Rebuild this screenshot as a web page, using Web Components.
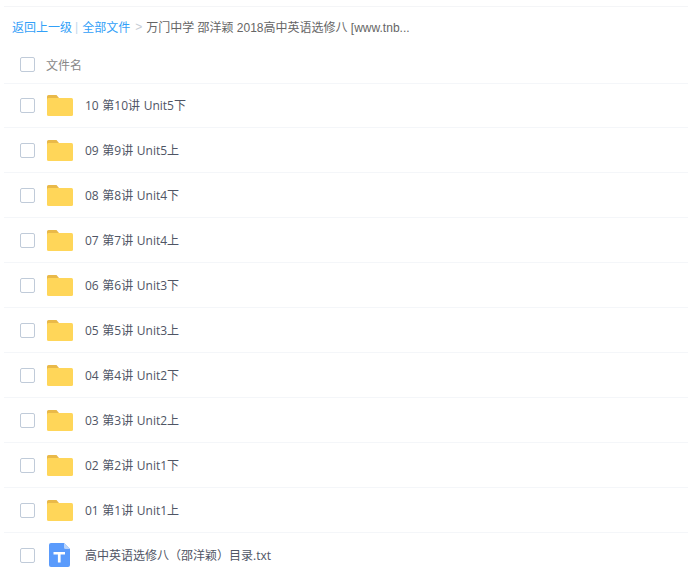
<!DOCTYPE html>
<html><head><meta charset="utf-8">
<style>
html,body{margin:0;padding:0;background:#fff;height:568px;overflow:hidden}
body{font-family:"Open Sans","Noto Sans CJK SC",sans-serif;font-size:12px}
</style></head><body>
<file-browser>
<crumb-bar></crumb-bar>
<list-header></list-header>
<file-row first kind="folder" name="10 第10讲 Unit5下"></file-row>
<file-row kind="folder" name="09 第9讲 Unit5上"></file-row>
<file-row kind="folder" name="08 第8讲 Unit4下"></file-row>
<file-row kind="folder" name="07 第7讲 Unit4上"></file-row>
<file-row kind="folder" name="06 第6讲 Unit3下"></file-row>
<file-row kind="folder" name="05 第5讲 Unit3上"></file-row>
<file-row kind="folder" name="04 第4讲 Unit2下"></file-row>
<file-row kind="folder" name="03 第3讲 Unit2上"></file-row>
<file-row kind="folder" name="02 第2讲 Unit1下"></file-row>
<file-row kind="folder" name="01 第1讲 Unit1上"></file-row>
<file-row kind="txt" name="高中英语选修八（邵洋颖）目录.txt"></file-row>
</file-browser>
<script>
const def=(n,html)=>customElements.define(n,class extends HTMLElement{
  connectedCallback(){ if(this.shadowRoot) return; const s=this.attachShadow({mode:'open'}); s.innerHTML=html(this); }
});
def('file-browser',()=>`<style>:host{display:block;margin:6px 0 0 4px;border-top:1px solid #f4f5f7}</style><slot></slot>`);
def('crumb-bar',()=>`<style>
:host{display:flex;align-items:center;height:39px;padding-left:8px;color:#666;font:12px "Liberation Sans","Noto Sans CJK SC",sans-serif;white-space:nowrap}
a{color:#32a0f8}.sep{color:#c4d8ec;margin:0 4px 0 3px}.gt{color:#c6ccd4;margin:0 4px 0 5px}
</style><a>返回上一级</a><span class="sep">|</span><a>全部文件</a><span class="gt">&gt;</span><span>万门中学 邵洋颖 2018高中英语选修八 [www.tnb...</span>`);
const box=`<span class="cb"></span>`;
const boxCss=`.cb{width:13px;height:13px;border:1px solid #c0cbd9;border-radius:2px;box-sizing:content-box;flex:none;margin-left:16px;background:#fff}`;
def('list-header',()=>`<style>
:host{display:flex;align-items:center;height:37px;color:#888;border-bottom:1px solid #f4f6f9;font-size:12px}
${boxCss}.t{margin-left:11px}</style>${box}<span class="t">文件名</span>`);
const folder=`<svg width="28" height="24" viewBox="0 0 28 24"><path d="M1 3.5A1.5 1.5 0 0 1 2.5 2H10.5L13 5v8H1z" fill="#e9b949"/><rect x="1" y="5" width="26" height="18" rx="1.5" fill="#ffd659"/></svg>`;
const txt=`<svg width="28" height="26" viewBox="0 0 28 26"><path d="M3 3A2 2 0 0 1 5 1H18L24 7V23A2 2 0 0 1 22 25H5A2 2 0 0 1 3 23Z" fill="#5a9bfc"/><path d="M18 1L24 7H19.5A1.5 1.5 0 0 1 18 5.5Z" fill="#b9d4fb"/><path d="M7.5 10H19V12.5H14.6V20.5H11.9V12.5H7.5Z" fill="#fff"/></svg>`;
def('file-row',h=>`<style>
:host{display:flex;align-items:center;height:44px;${h.hasAttribute('first')?'margin-top:-1px;':''}border-bottom:1px solid #f4f6f9;color:#555;font-size:12px;white-space:nowrap}
${boxCss}.i{display:flex;width:28px;height:26px;align-items:center;margin:0 11px 0 11px;flex:none}.n{color:#4f5565;word-spacing:.5px}</style>
${box}<span class="i">${h.getAttribute('kind')==='txt'?txt:folder}</span><span class="n">${h.getAttribute('name')}</span>`);
</script>
</body></html>
